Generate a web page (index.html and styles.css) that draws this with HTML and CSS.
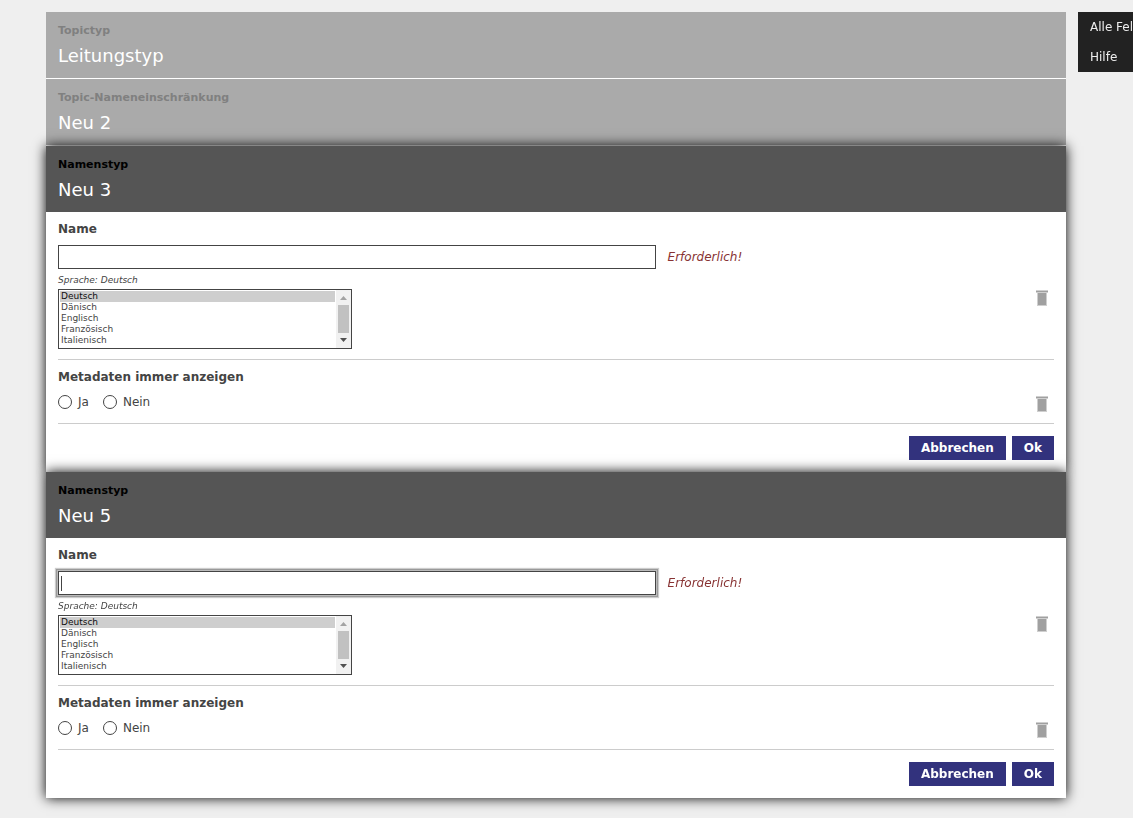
FILE: index.html
```html
<!DOCTYPE html>
<html lang="de">
<head>
    <meta charset="UTF-8">
    <meta name="viewport" content="width=device-width, initial-scale=1.0">
    <title>Leitungstyp</title>
    <link rel="stylesheet" href="styles.css">
</head>
<body>
    <main class="stack">
        <section class="card parent">
            <header class="card-head">
                <div class="card-type">Topictyp</div>
                <h1>Leitungstyp</h1>
            </header>
        </section>
        <section class="card parent">
            <header class="card-head">
                <div class="card-type">Topic-Nameneinschränkung</div>
                <h1>Neu 2</h1>
            </header>
        </section>

        <form class="card open">
            <header class="card-head">
                <div class="card-type">Namenstyp</div>
                <h1>Neu 3</h1>
            </header>
            <div class="card-body">
                <div class="field">
                    <label class="field-label" for="name3">Name</label>
                    <div class="input-row">
                        <input class="text-input" type="text" id="name3">
                        <span class="required">Erforderlich!</span>
                    </div>
                    <label class="lang-label" for="lang3">Sprache: Deutsch</label>
                    <div class="value-row">
                        <div class="lang-box">
                            <select class="lang-list" id="lang3" size="5">
                                <option selected>Deutsch</option>
                                <option>Dänisch</option>
                                <option>Englisch</option>
                                <option>Französisch</option>
                                <option>Italienisch</option>
                            </select>
                            <svg class="scrollbar" width="15" height="58" viewBox="0 0 15 58"><path d="M0 0h15v58H0z" fill="#f1f1f1"/><path d="M2 15h11v28H2z" fill="#c1c1c1"/><path d="M4 10h7L7.500 6z" fill="#a3a3a3"/><path d="M4 48h7l-3.500 4z" fill="#505050"/></svg>
                        </div>
                        <button class="trash" type="button" aria-label="Löschen">
                            <svg width="12" height="16" viewBox="0 0 12 16"><path d="M0 0h12v3h-1v13H1V3H0z" fill="#cfcfcf"/><path d="M0 1h12v1H0zM2 3h8v12H2z" fill="#a0a0a0"/></svg>
                        </button>
                    </div>
                </div>
                <fieldset class="field">
                    <legend class="field-label">Metadaten immer anzeigen</legend>
                    <div class="value-row">
                        <div class="radios">
                            <label><input type="radio" name="meta3">Ja</label>
                            <label><input type="radio" name="meta3">Nein</label>
                        </div>
                        <button class="trash" type="button" aria-label="Löschen">
                            <svg width="12" height="16" viewBox="0 0 12 16"><path d="M0 0h12v3h-1v13H1V3H0z" fill="#cfcfcf"/><path d="M0 1h12v1H0zM2 3h8v12H2z" fill="#a0a0a0"/></svg>
                        </button>
                    </div>
                </fieldset>
                <div class="actions">
                    <button class="btn" type="button">Abbrechen</button>
                    <button class="btn" type="button">Ok</button>
                </div>
            </div>
        </form>

        <form class="card open">
            <header class="card-head">
                <div class="card-type">Namenstyp</div>
                <h1>Neu 5</h1>
            </header>
            <div class="card-body">
                <div class="field">
                    <label class="field-label" for="name5">Name</label>
                    <div class="input-row">
                        <input class="text-input" type="text" id="name5" autofocus>
                        <span class="required">Erforderlich!</span>
                    </div>
                    <label class="lang-label" for="lang5">Sprache: Deutsch</label>
                    <div class="value-row">
                        <div class="lang-box">
                            <select class="lang-list" id="lang5" size="5">
                                <option selected>Deutsch</option>
                                <option>Dänisch</option>
                                <option>Englisch</option>
                                <option>Französisch</option>
                                <option>Italienisch</option>
                            </select>
                            <svg class="scrollbar" width="15" height="58" viewBox="0 0 15 58"><path d="M0 0h15v58H0z" fill="#f1f1f1"/><path d="M2 15h11v28H2z" fill="#c1c1c1"/><path d="M4 10h7L7.500 6z" fill="#a3a3a3"/><path d="M4 48h7l-3.500 4z" fill="#505050"/></svg>
                        </div>
                        <button class="trash" type="button" aria-label="Löschen">
                            <svg width="12" height="16" viewBox="0 0 12 16"><path d="M0 0h12v3h-1v13H1V3H0z" fill="#cfcfcf"/><path d="M0 1h12v1H0zM2 3h8v12H2z" fill="#a0a0a0"/></svg>
                        </button>
                    </div>
                </div>
                <fieldset class="field">
                    <legend class="field-label">Metadaten immer anzeigen</legend>
                    <div class="value-row">
                        <div class="radios">
                            <label><input type="radio" name="meta5">Ja</label>
                            <label><input type="radio" name="meta5">Nein</label>
                        </div>
                        <button class="trash" type="button" aria-label="Löschen">
                            <svg width="12" height="16" viewBox="0 0 12 16"><path d="M0 0h12v3h-1v13H1V3H0z" fill="#cfcfcf"/><path d="M0 1h12v1H0zM2 3h8v12H2z" fill="#a0a0a0"/></svg>
                        </button>
                    </div>
                </fieldset>
                <div class="actions">
                    <button class="btn" type="button">Abbrechen</button>
                    <button class="btn" type="button">Ok</button>
                </div>
            </div>
        </form>
    </main>

    <nav class="side-menu">
        <a href="#">Alle Felder</a>
        <a href="#">Hilfe</a>
    </nav>
</body>
</html>
```
FILE: styles.css
```css
* {
    box-sizing: border-box;
}
body {
    margin: 0;
    padding: 12px 0 20px 46px;
    display: flex;
    align-items: flex-start;
    gap: 12px;
    background-color: #efefef;
    color: #444;
    font-family: Verdana, "DejaVu Sans", sans-serif;
    font-size: 12px;
}
h1 {
    margin: 0;
    color: #fff;
    font-size: 18px;
    font-weight: normal;
    line-height: 24px;
}
button, input, select {
    font-family: inherit;
}

/* stacked cards */
.stack {
    flex: 1;
    min-width: 0;
}
.card-head {
    height: 66px;
    padding: 11px 12px 10px;
    background-color: #555;
}
.card-type {
    margin-bottom: 5px;
    color: #000;
    font-size: 11px;
    font-weight: bold;
    line-height: 16px;
}
.parent {
    border-bottom: 1px solid #fff;
}
.parent .card-head {
    background-color: #aaa;
}
.parent .card-type {
    color: #808080;
}
.open {
    background-color: #fff;
    box-shadow: 0 0 12px #000;
}
.card-body {
    padding: 0 12px 12px;
}

/* fields */
.field {
    min-width: 0;
    margin: 0;
    padding: 9px 0 10px;
    border: none;
    border-bottom: 1px solid #ccc;
}
.field-label {
    display: block;
    padding: 0;
    font-weight: bold;
    line-height: 16px;
}
fieldset .field-label {
    float: left;
    width: 100%;
    margin-bottom: 10px;
}
.input-row {
    display: flex;
    align-items: center;
    gap: 12px;
    margin-top: 8px;
}
.text-input {
    width: 60%;
    height: 24px;
    padding: 0 2px;
    border: 1px solid #444;
    font-size: 12px;
}
.text-input:focus {
    outline: none;
    box-shadow: 0 0 0 1px #bbb, 0 0 0 2px #999, 0 0 1px 3px #ccc;
    background: linear-gradient(#444, #444) 2px center / 1px 15px no-repeat #fff;
    caret-color: transparent;
}
.required {
    color: #833;
    font-style: italic;
}
.lang-label {
    display: block;
    margin: 5px 0 3px;
    font-size: 9px;
    font-style: italic;
    line-height: 12px;
}
.value-row {
    display: flex;
    justify-content: space-between;
    align-items: flex-start;
    clear: both;
}
.lang-box {
    position: relative;
    width: 294px;
}
.lang-list {
    display: block;
    width: 100%;
    height: 60px;
    padding: 1px 16px 1px 1px;
    border: 1px solid #444;
    border-radius: 0;
    color: #444;
    font-size: 9px;
}
.lang-list option {
    height: 11px;
    min-height: 11px;
    padding: 0 1px;
}
.scrollbar {
    position: absolute;
    top: 1px;
    right: 1px;
}
.radios {
    display: flex;
    gap: 14px;
}
.radios label {
    display: flex;
    align-items: center;
    gap: 6px;
    line-height: 14px;
}
.radios input {
    appearance: none;
    width: 14px;
    height: 14px;
    margin: 0;
    border: 1px solid #444;
    border-radius: 50%;
    background-color: #fff;
}
.trash {
    display: flex;
    padding: 1px 6px;
    border: none;
    background: none;
    cursor: pointer;
}

.actions {
    display: flex;
    justify-content: flex-end;
    gap: 6px;
    margin-top: 12px;
}
.btn {
    height: 24px;
    padding: 0 12px;
    border: none;
    background-color: #32327d;
    color: #fff;
    font-size: 12px;
    font-weight: bold;
    cursor: pointer;
}

/* side menu, runs off the right edge */
.side-menu {
    flex: 0 0 55px;
    overflow: hidden;
    background-color: #222;
}
.side-menu a {
    display: block;
    padding: 0 12px;
    color: #eee;
    line-height: 30px;
    text-decoration: none;
    white-space: nowrap;
}
```
